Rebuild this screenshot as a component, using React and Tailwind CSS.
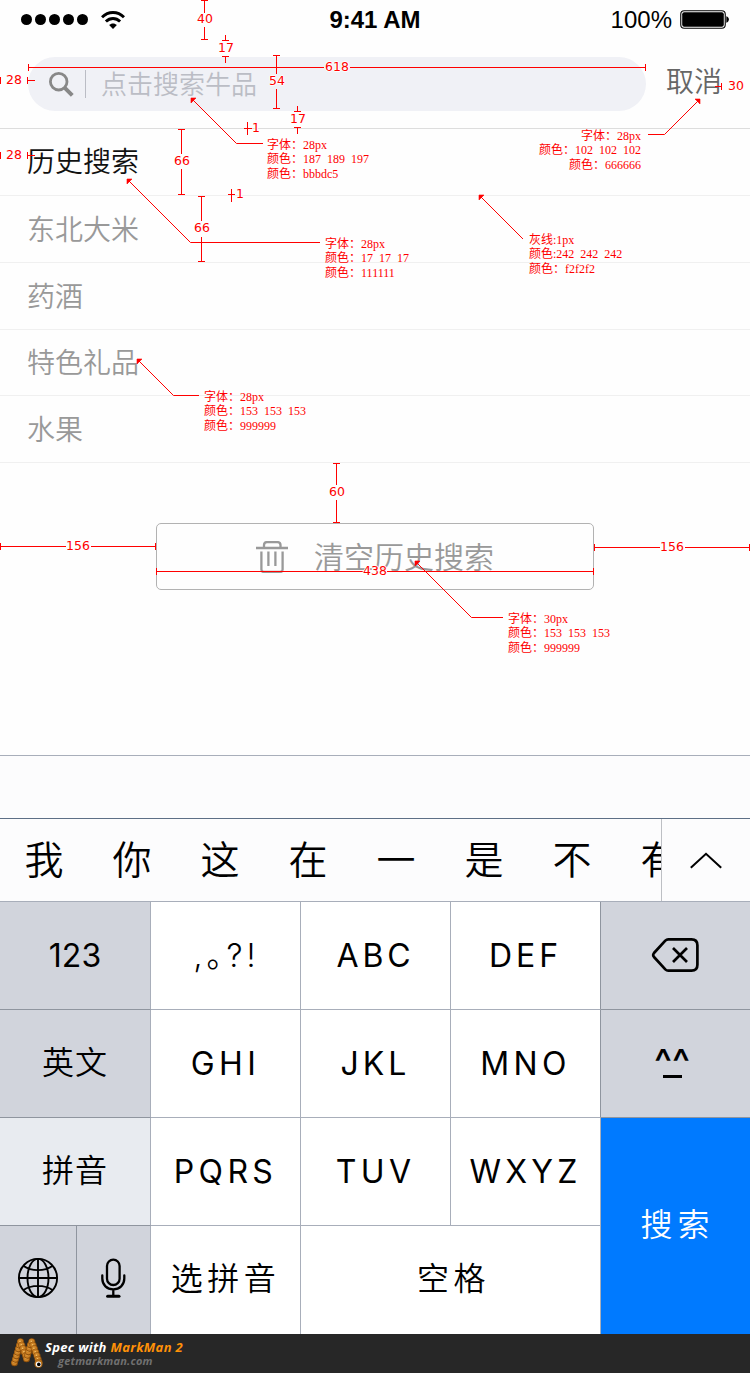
import React from "react";

const CJK = "font-['Noto_Sans_CJK_SC',sans-serif]";
const DEMI = "font-['Noto_Sans_CJK_SC_DemiLight','Noto_Sans_CJK_SC',sans-serif] font-[350]";
const KEY = "font-['Inter','Noto_Sans_CJK_SC_DemiLight','Noto_Sans_CJK_SC',sans-serif] font-[350]";

function StatusBar() {
  return (
    <div className="grid h-10 grid-cols-3 items-center font-['Liberation_Sans',sans-serif] text-2xl leading-10 text-black">
      <div className="flex items-center gap-[13px] pb-px pl-[21px]">
        <div className="flex gap-[3px]">
          {[0, 1, 2, 3, 4].map((i) => (
            <span key={i} className="size-[11px] rounded-full bg-black" />
          ))}
        </div>
        <svg width="24" height="18" viewBox="0 0 24 18" fill="none" stroke="#000" strokeWidth="2.9">
          <path d="M1 6.3C7.2-.1 16.8-.1 23 6.3" />
          <path d="M4.9 10.5C9.1 6.4 14.9 6.4 19.1 10.5" />
          <path d="M12 18 8.1 14.1C10.3 12 13.7 12 15.9 14.1Z" fill="#000" stroke="none" />
        </svg>
      </div>
      <div className="text-center font-bold">9:41 AM</div>
      <div className="flex items-center justify-end gap-[8px] pr-[21px]">
        <span>100%</span>
        <svg className="mb-px" width="49" height="19" viewBox="0 0 49 19">
          <rect x=".75" y=".75" width="44.5" height="17.5" rx="3.5" fill="none" stroke="#000" strokeWidth="1.1" />
          <rect x="2.2" y="2.2" width="41.6" height="14.6" rx="2" />
          <path d="M46.3 6.3C49.7 6.8 49.7 12.2 46.3 12.7Z" />
        </svg>
      </div>
    </div>
  );
}

function SearchHeader() {
  return (
    <div className={`flex h-[89px] border-b border-[#dddddd] pt-[17px] pl-7 ${DEMI}`}>
      <div className="flex h-[54px] w-[618px] items-center rounded-full bg-[#f0f1f6] pl-[21px]">
        <svg width="25" height="25" viewBox="0 0 25 25" fill="none" stroke="#888">
          <circle cx="9.7" cy="9.7" r="8.3" strokeWidth="2.8" />
          <path d="m15.8 15.8 7.5 7.5" strokeWidth="4" />
        </svg>
        <span className="ml-[11px] h-7 w-px bg-[#bbbdc5]" />
        <span className="ml-[15px] pb-[2px] text-[26px] leading-[52px] text-[#bbbdc5]">点击搜索牛品</span>
      </div>
      <span className="ml-5 text-[28px] leading-[47px] text-[#666666]">取消</span>
    </div>
  );
}

const history = [
  { text: "历史搜索", row: "h-[67px] leading-[63px] text-[#111111]" },
  { text: "东北大米", row: "h-[67px] leading-[64px] text-[#999999]" },
  { text: "药酒", row: "h-[67px] leading-[64px] text-[#999999]" },
  { text: "特色礼品", row: "h-[66px] leading-[63px] text-[#999999]" },
  { text: "水果", row: "h-[67px] leading-[64px] text-[#999999]" },
];

function History() {
  return (
    <ul className={`text-[28px] ${DEMI}`}>
      {history.map((h) => (
        <li key={h.text} className={`border-b border-[#f0f0f0] pl-[27px] ${h.row}`}>
          {h.text}
        </li>
      ))}
    </ul>
  );
}

function ClearButton() {
  return (
    <button className={`mx-auto mt-[60px] flex h-[67px] w-[438px] items-center rounded-[5px] border border-[#b2b2b2] pl-[99px] text-[30px] text-[#999999] ${DEMI}`}>
      <svg width="32" height="32" viewBox="0 0 32 32" fill="none" stroke="#999" strokeWidth="2.3">
        <path d="M0 7h32M8 7V4Q8 1.1 11 1.1H21.5Q24.5 1.1 24.5 4V7" />
        <path d="M5.4 10.5V28.5Q5.4 31 8 31H24Q26.6 31 26.6 28.5V10.5" />
        <path d="M12.4 10.5V25M19.4 10.5V25" />
      </svg>
      <span className="ml-[26px] pb-[3px]">清空历史搜索</span>
    </button>
  );
}

function Candidates() {
  return (
    <div className="flex h-[83px] border-b border-[#a8aeba] bg-[#fcfcfd]">
      <div className={`flex w-[662px] shrink-0 overflow-hidden border-r border-[#bdbfc4] text-[39px] leading-[76px] text-black ${DEMI}`}>
        {["我", "你", "这", "在", "一", "是", "不", "有"].map((c) => (
          <span key={c} className="w-[88px] shrink-0 text-center">{c}</span>
        ))}
      </div>
      <div className="flex flex-1 items-center justify-center">
        <svg width="32" height="17" viewBox="0 0 32 17" fill="none" stroke="#000" strokeWidth="2">
          <path d="M.8 15.8 16 1.8 31.2 15.8" />
        </svg>
      </div>
    </div>
  );
}

function Key({ children, className = "bg-white" }) {
  return (
    <div className={`flex items-center justify-center border-r border-b border-[#a8aeba] ${className}`}>{children}</div>
  );
}

const GREY = "bg-[#d1d4dc] border-b-[#8f959f]";

function Keyboard() {
  return (
    <div>
      <div className="h-[64px] border-t border-b border-t-[#a8aeba] border-b-[#5d6f86] bg-[#fcfcfd]" />
      <Candidates />
      <div className={`grid h-[432px] grid-cols-[151px_150px_150px_150px_149px] grid-rows-4 text-[32px] text-black ${KEY}`}>
        <Key className={GREY}><span className="font-normal">123</span></Key>
        <Key>
          <span className="flex pl-[2px] tracking-[4px]">
            <span>,</span>
            <span className="[font-feature-settings:'halt']">。</span>
            <span>?!</span>
          </span>
        </Key>
        <Key><span className="font-normal tracking-[3.8px]">ABC</span></Key>
        <Key className="border-r-[#8f959f] bg-white"><span className="font-normal tracking-[4px]">DEF</span></Key>
        <Key className="border-r-0 border-b-[#8f959f] bg-[#d1d4dc] pr-[2px] pb-px">
          <svg width="48" height="36" viewBox="0 0 48 36" fill="none" stroke="#000" strokeWidth="2.7" strokeLinejoin="round">
            <path d="M17.3 2.3H40.5Q46.4 2.3 46.4 8.2V27.8Q46.4 33.7 40.5 33.7H17.3Q15.6 33.7 14.3 32.4L3 20Q1.4 18 3 16L14.3 3.6Q15.6 2.3 17.3 2.3Z" />
            <path d="m22 11 14 14M36 11 22 25" />
          </svg>
        </Key>

        <Key className={GREY}><span className="pb-[2px] tracking-[1px]">英文</span></Key>
        <Key><span className="font-normal tracking-[4.5px]">GHI</span></Key>
        <Key><span className="font-normal tracking-[4px]">JKL</span></Key>
        <Key className="border-r-[#8f959f] bg-white"><span className="font-normal tracking-[4.3px]">MNO</span></Key>
        <Key className="border-r-0 border-b-[#8f959f] bg-[#d1d4dc] pb-[5px]">
          <div className="flex flex-col items-center pr-[7px]">
            <span className="h-[30px] text-[38px] leading-[35px] font-medium">^^</span>
            <span className="h-[3px] w-[19px] bg-black" />
          </div>
        </Key>

        <Key className="border-b-[#8f959f] bg-[#e8ebf0]"><span className="pb-[2px] tracking-[1px]">拼音</span></Key>
        <Key><span className="font-normal tracking-[4.4px]">PQRS</span></Key>
        <Key><span className="font-normal tracking-[4.4px]">TUV</span></Key>
        <Key><span className="font-normal tracking-[4.2px]">WXYZ</span></Key>
        <div className="row-span-2 flex items-center justify-center bg-[#007aff] pb-[3px] pl-[4px] text-white">
          <span className="tracking-[5px]">搜索</span>
        </div>

        <div className="grid grid-cols-[77px_74px]">
          <div className="flex items-center justify-center border-r border-[#8f959f] bg-[#d1d4dc] pb-[4px]">
            <svg width="42" height="42" viewBox="0 0 42 42" fill="none" stroke="#000" strokeWidth="1.9">
              <circle cx="21" cy="21" r="19.1" />
              <ellipse cx="21" cy="21" rx="10.5" ry="19.1" />
              <path d="M21 2V40M2 21H40M6.2 8.8C14.5 14.6 27.5 14.6 35.8 8.8M6.2 33.2C14.5 27.4 27.5 27.4 35.8 33.2" />
            </svg>
          </div>
          <div className="flex items-center justify-center border-r border-[#a8aeba] bg-[#d1d4dc] pr-[2px] pb-[4px]">
            <svg width="26" height="40" viewBox="0 0 26 40" fill="none" stroke="#000" strokeWidth="2.3" strokeLinecap="round">
              <rect x="7" y="1.6" width="12.6" height="25.4" rx="6.3" />
              <path d="M2.3 17.5V20.5C2.3 27 7 31.3 13.3 31.3S24.3 27 24.3 20.5V17.5M13.3 31.5V38" />
              <path d="M7.6 38.2H19" strokeWidth="3" />
            </svg>
          </div>
        </div>
        <div className="flex items-center justify-center border-r border-[#a8aeba] bg-white pb-[3px]"><span className="tracking-[4.5px]">选拼音</span></div>
        <div className="col-span-2 flex items-center justify-center border-r border-[#a8aeba] bg-white pb-[3px] pl-[6px]"><span className="tracking-[4.5px]">空格</span></div>
      </div>
    </div>
  );
}

const wormBeads = [
  [5, 25], [6, 21.5], [7, 18], [8, 14.5], [9, 11], [10, 7.5], [11, 4],
  [12.3, 7.5], [13.6, 11], [14.9, 14.5], [16.2, 18], [17, 21],
  [18, 17.5], [19, 14], [20, 10.5], [21, 7], [22.3, 4],
  [23.6, 7.5], [24.9, 11], [26.2, 14.5], [27.5, 18], [28.6, 21.5], [29.5, 24.5],
];

function Footer() {
  return (
    <footer className="flex h-[39px] bg-[#272727] pl-[10px] font-['Open_Sans',sans-serif] font-bold italic">
      <svg width="35" height="39" viewBox="0 0 35 39">
        <g transform="translate(-.5 3.8)">
          {wormBeads.map(([x, y], i) => (
            <g key={i}>
              <circle cx={x} cy={y} r="3.5" fill="#8f500c" />
              <circle cx={x - 0.2} cy={y - 0.3} r="2.7" fill="#cc8226" />
              <circle cx={x - 0.5} cy={y - 0.6} r=".8" fill="#f5c66e" />
            </g>
          ))}
          <circle cx="29" cy="26" r="4" fill="#b46d18" />
          <circle cx="29" cy="26.4" r="2.7" fill="#fff" />
          <circle cx="29.3" cy="26.6" r="1.8" fill="#000" />
        </g>
      </svg>
      <div className="pt-[5px]">
        <div className="text-[13px] leading-[17px] tracking-[.33px] whitespace-nowrap text-white">
          Spec with <span className="text-[#ff9108]">MarkMan 2</span>
        </div>
        <div className="pl-[13px] text-[11px] leading-[9px] tracking-[.2px] text-[#707070]">getmarkman.com</div>
      </div>
    </footer>
  );
}

// Dimension values: [centre x, centre y, value]
const dims = [
  [205, 19, "40"], [226, 48, "17"], [337, 67, "618"], [14, 80, "28"], [277, 81, "54"],
  [298, 119, "17"], [256, 128, "1"], [14, 155, "28"], [182, 161, "66"], [240, 194, "1"],
  [202, 228, "66"], [736, 86, "30"], [337, 492, "60"], [78, 546, "156"], [375, 571, "438"], [672, 547, "156"],
];

const dimLines = [
  "M201 .5h7M204.5 0v13M204.5 27v13M201 39.5h7",
  "M225.5 35v6M222 40.5h7M222 56.5h7M225.5 56v7",
  "M28.5 64v7M28 67.5h296M350 67.5h296M645.5 64v7",
  "M.5 77v7M27.5 77v7M28 80.5h7M.5 152v7M27.5 152v7M28 155.5h7",
  "M273 55.5h7M276.5 55v19M276.5 89v20M273 108.5h7",
  "M297.5 106v6M294 111.5h7M294 127.5h7M297.5 127v7",
  "M247.5 122v13M244 128.5h8M231.5 189v13M228 194.5h7",
  "M178 129.5h7M181.5 129v25M181.5 169v26M178 194.5h7",
  "M198 196.5h7M201.5 196v25M201.5 237v25M198 261.5h7",
  "M715 86.5h7M721.5 83v7",
  "M333 463.5h7M336.5 463v22M336.5 500v23M333 522.5h7",
  "M.5 543v7M0 546.5h66M91 546.5h65M155.5 543v7",
  "M156.5 568v7M156 571.5h207M387 571.5h207M593.5 568v7",
  "M594.5 544v7M594 547.5h66M685 547.5h65M749.5 544v7",
];

const leaders = [
  "M192 99 236.5 143.5H263",
  "M128 180 190.5 242.5H320",
  "M699 100 664.5 134.5H648",
  "M480 196 523 239",
  "M138 360 173.5 395.5H199",
  "M416 562 471.5 617.5H503",
];

const heads = [
  "M191 98h5l-1 1-3 3-1 1z", "M127 179h5l-1 1-3 3-1 1z", "M700 99h-5l1 1 3 3 1 1z",
  "M479 195h5l-1 1-3 3-1 1z", "M137 359h5l-1 1-3 3-1 1z", "M415 561h5l-1 1-3 3-1 1z",
];

const notes = [
  { at: "left-[267px] top-[137px]", lines: [["字体：", "28px"], ["颜色：", "187 189 197"], ["颜色：", "bbbdc5"]] },
  { at: "left-[325px] top-[236px]", lines: [["字体：", "28px"], ["颜色：", "17 17 17"], ["颜色：", "111111"]] },
  { at: "right-[109px] top-[128px] text-right", lines: [["字体：", "28px"], ["颜色：", "102 102 102"], ["颜色：", "666666"]] },
  { at: "left-[529px] top-[232px]", lines: [["灰线", ":1px"], ["颜色", ":242 242 242"], ["颜色：", "f2f2f2"]] },
  { at: "left-[204px] top-[389px]", lines: [["字体：", "28px"], ["颜色：", "153 153 153"], ["颜色：", "999999"]] },
  { at: "left-[508px] top-[611px]", lines: [["字体：", "30px"], ["颜色：", "153 153 153"], ["颜色：", "999999"]] },
];

function Annotations() {
  return (
    <div className="pointer-events-none absolute inset-0 text-[#ff0000]">
      <svg className="absolute inset-0" width="750" height="1373" viewBox="0 0 750 1373" fill="none" stroke="#f00">
        {dimLines.map((d) => <path key={d} d={d} />)}
        {leaders.map((d) => <path key={d} d={d} />)}
        {heads.map((d) => <path key={d} d={d} fill="#f00" strokeWidth=".6" />)}
      </svg>
      {dims.map(([x, y, v]) => (
        <span
          key={`${x}-${y}`}
          style={{ left: x, top: y }}
          className="absolute -translate-x-1/2 -translate-y-1/2 font-['DejaVu_Sans',sans-serif] text-[12.5px] leading-[14px] [text-shadow:1px_0_#fff,-1px_0_#fff,0_1px_#fff,0_-1px_#fff]"
        >
          {v}
        </span>
      ))}
      {notes.map((n) => (
        <div key={n.at} className={`absolute text-[12px] leading-[14.4px] whitespace-nowrap ${n.at}`}>
          {n.lines.map(([label, value], i) => (
            <div key={i} className="h-[14.4px]">
              <span className={CJK}>{label}</span>
              <span className="font-['Liberation_Serif',serif] [word-spacing:3px]">{value}</span>
            </div>
          ))}
        </div>
      ))}
    </div>
  );
}

export default function App() {
  return (
    <div className="relative h-[1373px] w-[750px] overflow-hidden bg-[#fefefe]">
      <StatusBar />
      <SearchHeader />
      <main className="h-[626px]">
        <History />
        <ClearButton />
      </main>
      <Keyboard />
      <Footer />
      <Annotations />
    </div>
  );
}
